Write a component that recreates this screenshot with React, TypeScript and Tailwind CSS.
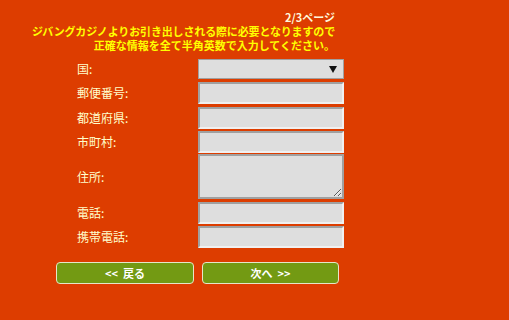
import React from "react";

const font = { fontFamily: '"Noto Sans CJK JP", "Noto Sans", sans-serif' };

function Row({ label, children, className }: { label: string; children: React.ReactNode; className?: string }) {
  return (
    <div className={"flex items-center " + (className ?? "")}>
      <div className="w-[121px] text-[12px] leading-[14px] text-[#ffffcc]">{label}</div>
      {children}
    </div>
  );
}

const inputCls =
  "block w-[146px] h-[22px] bg-[#dedede] border-2 border-t-[#a0a0a0] border-l-[#a0a0a0] border-r-[#f0f0f0] border-b-[#f0f0f0] outline-none";

export default function App() {
  return (
    <div className="w-full h-[320px] bg-[#dd3d00] overflow-hidden" style={font}>
      <div className="w-[335px] pt-[10px] text-right text-[11px] leading-[14px] font-bold">
        <div className="text-[#fff8dc]">2/3ページ</div>
        <div className="text-[#ffff00] tracking-[-0.15px]">ジバングカジノよりお引き出しされる際に必要となりますので</div>
        <div className="text-[#ffff00]">正確な情報を全て半角英数で入力してください。</div>
      </div>

      <div className="ml-[77px] mt-[7px] flex flex-col">
        <Row label="国:">
          <div className="relative w-[146px] h-[20px] bg-[#dedede] border border-[#a0a0a0]">
            <svg className="absolute right-[6px] top-[6px]" width="8" height="7" viewBox="0 0 8 7">
              <path d="M0 0 H8 L4 7 Z" fill="#111" />
            </svg>
          </div>
        </Row>
        <Row label="郵便番号:" className="mt-[3px]">
          <input className={inputCls} />
        </Row>
        <Row label="都道府県:" className="mt-[3px]">
          <input className={inputCls} />
        </Row>
        <Row label="市町村:" className="mt-[2px]">
          <input className={inputCls} />
        </Row>
        <Row label="住所:" className="mt-[1px]">
          <textarea className="block w-[146px] h-[45px] bg-[#dedede] border-2 border-[#a0a0a0] outline-none" />
        </Row>
        <Row label="電話:" className="mt-[3px]">
          <input className={inputCls} />
        </Row>
        <Row label="携帯電話:" className="mt-[2px]">
          <input className={inputCls} />
        </Row>
      </div>

      <div className="ml-[56px] mt-[14px] flex gap-[8px]">
        <button className="w-[138px] h-[22px] bg-[#739a13] border border-[#e6e6c8] rounded-[4px] text-white text-[11px] font-bold leading-[20px] whitespace-pre">
          {"<<  戻る"}
        </button>
        <button className="w-[137px] h-[22px] bg-[#739a13] border border-[#e6e6c8] rounded-[4px] text-white text-[11px] font-bold leading-[20px] whitespace-pre">
          {"次へ  >>"}
        </button>
      </div>
    </div>
  );
}
